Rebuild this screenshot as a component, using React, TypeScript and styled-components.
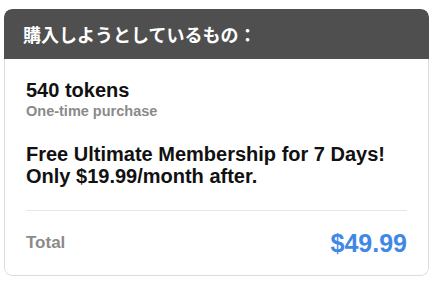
import styled, { createGlobalStyle } from "styled-components";

const GlobalStyle = createGlobalStyle`
  body {
    margin: 0;
    background: #ffffff;
    font-family: "Liberation Sans", Arial, "Noto Sans CJK JP", sans-serif;
  }
`;

const Page = styled.div`
  padding: 9px 8px 0 4px;
`;

const Card = styled.section`
  border-radius: 8px;
  overflow: hidden;
  background: #ffffff;
`;

const Header = styled.header`
  height: 50px;
  display: flex;
  align-items: center;
  padding: 0 19px;
  background: #4f4f4f;
  color: #ffffff;
  font-family: "Noto Sans CJK JP", sans-serif;
  font-weight: 700;
  font-size: 18px;
  border-radius: 8px 8px 0 0;
`;

const Body = styled.div`
  padding: 19px 21px 17px 21px;
  border: 1px solid #dcdcdc;
  border-top: none;
  border-radius: 0 0 8px 8px;
`;

const Title = styled.div`
  font-size: 20px;
  line-height: 24px;
  font-weight: 700;
  color: #111111;
`;

const Subtitle = styled.div`
  font-size: 14.5px;
  line-height: 18px;
  font-weight: 700;
  color: #8a8a8a;
`;

const Promo = styled.p`
  margin: 23px 0 0;
  font-size: 20px;
  line-height: 22px;
  font-weight: 700;
  color: #111111;
`;

const Divider = styled.hr`
  margin: 23px 0 17px;
  border: none;
  border-top: 1px solid #e6e6e6;
`;

const TotalRow = styled.div`
  display: flex;
  align-items: center;
  justify-content: space-between;
  height: 30px;
`;

const TotalLabel = styled.span`
  font-size: 17px;
  font-weight: 700;
  color: #8a8a8a;
`;

const TotalPrice = styled.span`
  font-size: 25px;
  line-height: 30px;
  font-weight: 700;
  color: #3f88e6;
`;

export default function App() {
  return (
    <>
      <GlobalStyle />
      <Page>
        <Card>
          <Header>購入しようとしているもの：</Header>
          <Body>
            <Title>540 tokens</Title>
            <Subtitle>One-time purchase</Subtitle>
            <Promo>
              Free Ultimate Membership for 7 Days!
              <br />
              Only $19.99/month after.
            </Promo>
            <Divider />
            <TotalRow>
              <TotalLabel>Total</TotalLabel>
              <TotalPrice>$49.99</TotalPrice>
            </TotalRow>
          </Body>
        </Card>
      </Page>
    </>
  );
}
